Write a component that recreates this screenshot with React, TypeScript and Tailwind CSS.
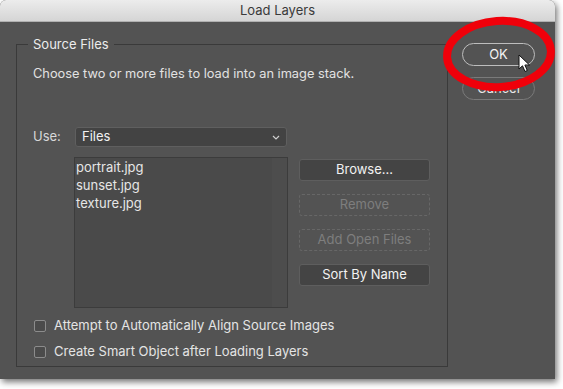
import React from "react";

const font = { fontFamily: "Inter, 'Noto Sans', sans-serif" };

const SideButton = ({ label, disabled }: { label: string; disabled?: boolean }) => (
  <div
    className={
      disabled
        ? "flex h-[22px] items-center justify-center rounded-[3px] border border-dashed border-[#676767] text-[13px] text-[#7e7e7e]"
        : "flex h-[22px] items-center justify-center rounded-[3px] border border-[#5e5e5e] bg-[#444444] text-[13px] text-[#f2f2f2]"
    }
  >
    {label}
  </div>
);

const Check = ({ label }: { label: string }) => (
  <div className="flex h-[13px] items-center gap-[8px]">
    <div className="h-[12px] w-[12px] rounded-[2px] border border-[#8c8c8c] bg-[#4b4b4b]" />
    <span className="text-[13px] text-[#e4e4e4]">{label}</span>
  </div>
);

export default function App() {
  return (
    <div className="h-[389px] w-[563px] bg-white" style={font}>
      <div className="h-[379px] w-[555px] overflow-hidden rounded-t-[6px] bg-[#535353] shadow-[2px_3px_6px_rgba(0,0,0,0.55)]">
        {/* title bar */}
        <div className="flex h-[22px] items-center justify-center border-b border-[#b0b0b0] bg-gradient-to-b from-[#ececec] to-[#d5d5d5] text-[13px] text-[#3a3a3a]">
          Load Layers
        </div>

        <div className="relative flex pl-[16px] pt-[22px]">
          {/* group box */}
          <div className="relative h-[323px] w-[432px] border border-[#3a3a3a] pl-[16px] pt-[21px]">
            <span className="absolute left-[11px] top-[-10px] bg-[#535353] px-[5px] text-[13px] text-[#ececec]">
              Source Files
            </span>
            <div className="text-[12.8px] leading-[16px] text-[#e2e2e2]">
              Choose two or more files to load into an image stack.
            </div>

            <div className="mt-[45px] flex items-center">
              <span className="w-[42px] text-[13px] text-[#d8d8d8]">Use:</span>
              <div className="flex h-[20px] w-[212px] items-center justify-between rounded-[3px] border border-[#5f5f5f] bg-[#434343] pl-[6px] pr-[6px] text-[13px] text-[#f2f2f2]">
                <span>Files</span>
                <svg width="8" height="5" viewBox="0 0 8 5">
                  <path d="M1 1 L4 4 L7 1" stroke="#cfcfcf" strokeWidth="1.2" fill="none" />
                </svg>
              </div>
            </div>

            <div className="mt-[10px] flex">
              <div className="ml-[41px] flex h-[151px] w-[214px] border border-[#3c3c3c] bg-[#4a4a4a]">
                <div className="flex-1 pl-[1px] pt-0 text-[13px] leading-[18px] text-[#e6e6e6]">
                  <div>portrait.jpg</div>
                  <div>sunset.jpg</div>
                  <div>texture.jpg</div>
                </div>
                <div className="w-[15px] bg-[#4d4d4d]" />
              </div>
              <div className="ml-[11px] mt-[2px] flex w-[131px] flex-col gap-[13px]">
                <SideButton label="Browse..." />
                <SideButton label="Remove" disabled />
                <SideButton label="Add Open Files" disabled />
                <SideButton label="Sort By Name" />
              </div>
            </div>

            <div className="mt-[11px] flex flex-col gap-[13px] pl-[1px]">
              <Check label="Attempt to Automatically Align Source Images" />
              <Check label="Create Smart Object after Loading Layers" />
            </div>
          </div>

          {/* right buttons */}
          <div className="ml-[14px] mt-[-1px] flex w-[73px] flex-col gap-[11px]">
            <div className="flex h-[23px] items-center justify-center rounded-full border border-[#bdbdbd] text-[13px] text-[#f4f4f4]">
              OK
            </div>
            <div className="flex h-[23px] items-center justify-center rounded-full border border-[#7a7a7a] text-[13px] text-[#e8e8e8]">
              Cancel
            </div>
          </div>

          {/* red annotation ellipse */}
          <svg className="pointer-events-none absolute left-[440px] top-[-8px]" width="118" height="80" viewBox="0 0 118 80">
            <ellipse cx="59" cy="40" rx="52" ry="33" stroke="#f0000a" strokeWidth="8" fill="none" transform="rotate(-4 59 40)" />
          </svg>

          {/* cursor */}
          <svg className="pointer-events-none absolute left-[518px] top-[32px]" width="14" height="20" viewBox="0 0 14 20">
            <path d="M1 1 L1 15 L4.5 11.8 L7 17.5 L9.3 16.5 L6.9 11 L11.5 11 Z" fill="#ffffff" stroke="#111111" strokeWidth="1" strokeLinejoin="round" />
          </svg>
        </div>
      </div>
    </div>
  );
}
